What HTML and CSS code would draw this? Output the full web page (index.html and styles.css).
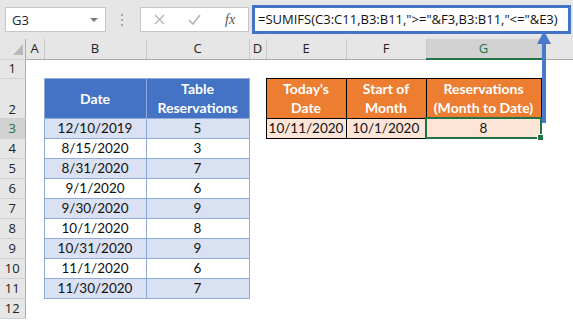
FILE: index.html
```html
<!DOCTYPE html>
<html lang="en">
<head>
    <meta charset="UTF-8">
    <title>SUMIFS Month to Date</title>
    <link rel="stylesheet" href="styles.css">
</head>
<body>
    <div class="toolbar">
        <div class="name-box"><span>G3</span><span class="caret"></span></div>
        <div class="grip">
            <svg width="4" height="14" viewBox="0 0 4 14"><rect x="1" y="1" width="2" height="2" fill="#a8a8a8"/><rect x="1" y="6" width="2" height="2" fill="#a8a8a8"/><rect x="1" y="11" width="2" height="2" fill="#a8a8a8"/></svg>
        </div>
        <div class="fx-buttons">
            <svg class="icon-x" width="11" height="11" viewBox="0 0 11 11"><path d="M1 1L10 10M10 1L1 10" stroke="#b4b4b4" stroke-width="1.4" fill="none"/></svg>
            <svg class="icon-check" width="13" height="11" viewBox="0 0 13 11"><path d="M1 6L5 10L12 1" stroke="#b4b4b4" stroke-width="1.6" fill="none"/></svg>
            <span class="fx">fx</span>
        </div>
        <div class="formula">=SUMIFS(C3:C11,B3:B11,"&gt;="&amp;F3,B3:B11,"&lt;="&amp;E3)</div>
    </div>

    <table class="sheet">
        <colgroup>
            <col class="w-rh"><col class="w-a"><col class="w-b"><col class="w-c"><col class="w-d">
            <col class="w-e"><col class="w-f"><col class="w-g"><col class="w-h">
        </colgroup>
        <tr class="col-heads">
            <th class="corner"><svg width="10" height="11" viewBox="0 0 10 11"><polygon points="10,0 10,11 0,11" fill="#b9b9b9"/></svg></th>
            <th>A</th><th>B</th><th>C</th><th>D</th><th>E</th><th>F</th><th class="sel-col">G</th><th></th>
        </tr>
        <tr class="r1">
            <th>1</th><td></td><td></td><td></td><td></td><td></td><td></td><td></td><td></td>
        </tr>
        <tr class="r2">
            <th class="rh-bottom">2</th><td></td>
            <td class="blue-hd">Date</td>
            <td class="blue-hd">Table<br>Reservations</td>
            <td></td>
            <td class="org-hd">Today's<br>Date</td>
            <td class="org-hd">Start of<br>Month</td>
            <td class="org-hd">Reservations<br>(Month to Date)</td>
            <td></td>
        </tr>
        <tr>
            <th class="sel-row">3</th><td></td>
            <td class="bt band">12/10/2019</td><td class="bt band">5</td><td></td>
            <td class="peach">10/11/2020</td><td class="peach">10/1/2020</td><td class="peach active">8</td><td></td>
        </tr>
        <tr><th>4</th><td></td><td class="bt">8/15/2020</td><td class="bt">3</td><td></td><td></td><td></td><td></td><td></td></tr>
        <tr><th>5</th><td></td><td class="bt band">8/31/2020</td><td class="bt band">7</td><td></td><td></td><td></td><td></td><td></td></tr>
        <tr><th>6</th><td></td><td class="bt">9/1/2020</td><td class="bt">6</td><td></td><td></td><td></td><td></td><td></td></tr>
        <tr><th>7</th><td></td><td class="bt band">9/30/2020</td><td class="bt band">9</td><td></td><td></td><td></td><td></td><td></td></tr>
        <tr><th>8</th><td></td><td class="bt">10/1/2020</td><td class="bt">8</td><td></td><td></td><td></td><td></td><td></td></tr>
        <tr><th>9</th><td></td><td class="bt band">10/31/2020</td><td class="bt band">9</td><td></td><td></td><td></td><td></td><td></td></tr>
        <tr><th>10</th><td></td><td class="bt">11/1/2020</td><td class="bt">6</td><td></td><td></td><td></td><td></td><td></td></tr>
        <tr><th>11</th><td></td><td class="bt band">11/30/2020</td><td class="bt band">7</td><td></td><td></td><td></td><td></td><td></td></tr>
        <tr><th>12</th><td></td><td></td><td></td><td></td><td></td><td></td><td></td><td></td></tr>
    </table>

    <svg class="arrow" width="14" height="92" viewBox="0 0 14 92">
        <polygon points="7,0 0,13 14,13" fill="#4a78cc"/>
        <rect x="5" y="12" width="4" height="80" fill="#4a78cc"/>
    </svg>
</body>
</html>
```

FILE: styles.css
```css
body {
    margin: 0;
    width: 573px;
    height: 321px;
    overflow: hidden;
    position: relative;
    background-color: #fff;
    font-family: "Lato", sans-serif;
}
.toolbar {
    display: flex;
    align-items: center;
    height: 39px;
    padding-left: 5px;
    background-color: #e6e6e6;
    box-sizing: border-box;
}
.name-box {
    width: 101px;
    height: 25px;
    box-sizing: border-box;
    border: 1px solid #c6c6c6;
    background-color: #fff;
    display: flex;
    align-items: center;
    justify-content: space-between;
    padding: 0 7px 0 6px;
    font-family: "Open Sans", sans-serif;
    font-size: 13px;
    color: #222;
}
.caret {
    border-left: 4px solid transparent;
    border-right: 4px solid transparent;
    border-top: 4px solid #7a7a7a;
}
.grip {
    width: 32px;
    display: flex;
    justify-content: center;
    padding-right: 2px;
}
.grip svg { display: block; }
.fx-buttons {
    width: 109px;
    height: 25px;
    box-sizing: border-box;
    border: 1px solid #c6c6c6;
    background-color: #fff;
    display: flex;
    align-items: center;
    padding-left: 13px;
}
.icon-x { margin-right: 23px; }
.icon-check { margin-right: 24px; }
.fx {
    font-family: "Liberation Serif", serif;
    font-style: italic;
    font-size: 14px;
    color: #555;
}
.formula {
    width: 319px;
    height: 29px;
    margin-left: 3px;
    box-sizing: border-box;
    border: 3px solid #4472c4;
    background-color: #fff;
    padding-left: 3px;
    font-family: "Open Sans", sans-serif;
    font-size: 13px;
    line-height: 23px;
    color: #111;
    white-space: nowrap;
    overflow: hidden;
}
.sheet {
    border-collapse: collapse;
    table-layout: fixed;
    width: 573px;
}
.w-rh { width: 25px; }
.w-a { width: 19px; }
.w-b { width: 102px; }
.w-c { width: 103px; }
.w-d { width: 17px; }
.w-e { width: 80px; }
.w-f { width: 80px; }
.w-g { width: 115px; }
.w-h { width: 32px; }
.sheet th {
    background-color: #e6e6e6;
    font-family: "Open Sans", sans-serif;
    font-weight: normal;
    font-size: 13px;
    line-height: 17px;
    color: #222;
    padding: 0;
}
.col-heads { height: 23px; }
.col-heads th {
    border-right: 1px solid #c8c8c8;
    border-bottom: 1px solid #ababab;
}
.corner {
    text-align: right;
    vertical-align: bottom;
}
.corner svg {
    display: block;
    margin: 0 2px 4px auto;
}
.sheet tr th:first-child {
    border-right: 1px solid #ababab;
    border-bottom: 1px solid #d0d0d0;
    text-align: center;
}
.sheet tr { height: 20px; }
.sheet .r1 { height: 19px; }
.sheet .r2 { height: 40px; }
.rh-bottom { vertical-align: bottom; }
.sheet .sel-col {
    background-color: #d2d2d2;
    color: #217346;
    border-bottom: 2px solid #217346;
}
.sheet tr .sel-row {
    background-color: #d2d2d2;
    color: #217346;
    border-right: 2px solid #217346;
}
.sheet td {
    padding: 0;
    text-align: center;
    font-size: 13.5px;
    color: #111;
    line-height: 17px;
}
.blue-hd {
    background-color: #4472c4;
    color: #fff !important;
    font-weight: bold;
    font-size: 14px !important;
    line-height: 19px !important;
    border: 1px solid #8ea9db;
}
.bt { border: 1px solid #8ea9db; }
.band { background-color: #d9e1f2; }
.org-hd {
    background-color: #ed7d31;
    color: #fff !important;
    font-weight: bold;
    font-size: 14px !important;
    line-height: 19px !important;
    border: 1px solid #000;
}
.peach {
    background-color: #fce4d6;
    border: 1px solid #000;
}
.sheet .active {
    position: relative;
    border: 2px solid #217346;
}
.active::after {
    content: '';
    position: absolute;
    right: -4px;
    bottom: -4px;
    width: 5px;
    height: 5px;
    background-color: #217346;
    border: 1px solid #fff;
}
.arrow {
    position: absolute;
    left: 537px;
    top: 31px;
}
```
